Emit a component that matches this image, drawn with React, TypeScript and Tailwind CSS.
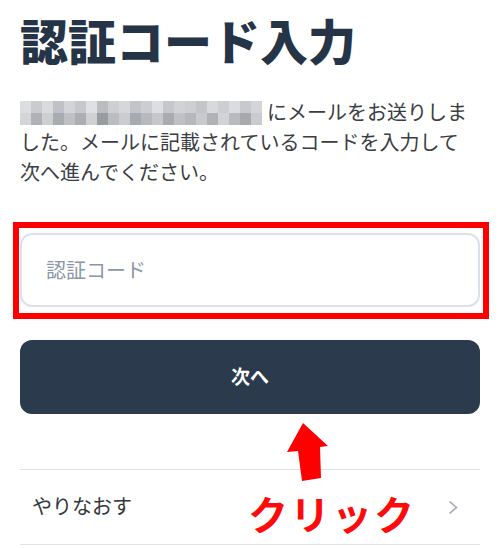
import { useState } from "react";

const jp = { fontFamily: '"Noto Sans", "Noto Sans CJK JP", sans-serif' };

// モザイク（メールアドレスのぼかし）
const mosaicTop = ["#d9dadd", "#c4c6ca", "#d6d7da", "#b9bbc0", "#cfd0d3", "#c1c3c7", "#dcdde0", "#b3b5ba", "#c9cacd", "#d2d3d6", "#bcbec3", "#c6c8cb", "#dadbde", "#c0c2c6", "#cdced1", "#c7c9cc", "#bdbfc3", "#d4d5d8", "#c8c9cd", "#d8d9dc", "#c2c4c8", "#d0d1d4"];
const mosaicBottom = ["#cfd1d4", "#a6a9ae", "#c8cacd", "#9fa2a8", "#b8babe", "#a3a6ab", "#c9cbce", "#8f9399", "#b4b6ba", "#c5c7ca", "#9ea1a7", "#b0b2b7", "#c0c2c5", "#a0a3a9", "#b9bbbf", "#aeb1b5", "#c3c5c8", "#a7aaaf", "#cdcfd2", "#b1b3b8", "#9da0a6", "#c4c6c9"];

function Mosaic() {
  return (
    <span className="flex flex-col shrink-0 mr-[5px] opacity-90">
      <span className="flex">
        {mosaicTop.map((c, i) => (
          <span key={i} className="w-[11px] h-[12px]" style={{ background: c }} />
        ))}
      </span>
      <span className="flex">
        {mosaicBottom.map((c, i) => (
          <span key={i} className="w-[11px] h-[12px]" style={{ background: c }} />
        ))}
      </span>
    </span>
  );
}

export default function App() {
  const [code, setCode] = useState("");

  return (
    <div className="relative w-[500px] h-[548px] overflow-hidden bg-white px-5" style={jp}>
      <h1 className="pt-[18px] text-[48px] font-black leading-none text-[#253447]">認証コード入力</h1>

      <div className="mt-[32px] text-[20px] leading-[30px] text-[#3a3d42]">
        <div className="flex h-[30px] items-center whitespace-nowrap">
          <Mosaic />
          にメールをお送りしま
        </div>
        <div className="h-[30px] whitespace-nowrap">した。メールに記載されているコードを入力して</div>
        <div className="h-[30px] whitespace-nowrap">次へ進んでください。</div>
      </div>

      <div className="relative mt-[45px]">
        <input
          value={code}
          onChange={(e) => setCode(e.target.value)}
          placeholder="認証コード"
          className="block w-full h-[74px] rounded-[12px] border-2 border-[#dbe1ea] bg-white px-6 text-[20px] text-[#253447] placeholder:text-[#8b96a6] outline-none"
        />
        <div className="pointer-events-none absolute -left-[7px] -right-[9px] -top-[11px] -bottom-[12px] border-[6px] border-[#ff0000]" />
      </div>

      <button className="mt-[33px] flex w-full h-[74px] items-center justify-center rounded-[12px] bg-[#2b3a4d] text-[19px] font-bold text-white">
        次へ
      </button>

      <div className="mt-[55px] flex h-[76px] items-center justify-between border-y border-[#dde3ea] pl-3 pr-[22px]">
        <span className="text-[20px] text-[#33363b]">やりなおす</span>
        <svg width="10" height="15" viewBox="0 0 10 15" fill="none">
          <path d="M1.5 1.5 L8.5 7.5 L1.5 13.5" stroke="#a3a8b0" strokeWidth="1.6" />
        </svg>
      </div>

      <svg className="pointer-events-none absolute left-0 top-0" width="500" height="548" viewBox="0 0 500 548">
        <polygon points="303,423 328,446 320,447 321,478 302,481 298,451 287,452" fill="#ff0000" />
      </svg>
      <span className="pointer-events-none absolute left-[248px] top-[495px] text-[40px] font-bold leading-none tracking-[2px] text-[#ff0a0a]">
        クリック
      </span>
    </div>
  );
}
